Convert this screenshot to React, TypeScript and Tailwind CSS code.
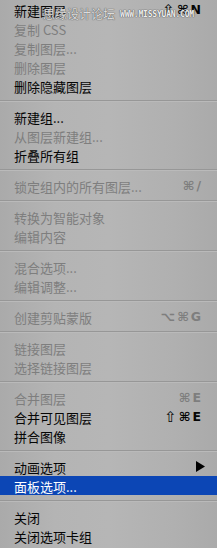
import React from "react";

type Item = {
  label: string;
  disabled?: boolean;
  shortcut?: string;
  submenu?: boolean;
  active?: boolean;
};

const sections: Item[][] = [
  [
    { label: "新建图层", shortcut: "⇧⌘N" },
    { label: "复制 CSS", disabled: true },
    { label: "复制图层...", disabled: true },
    { label: "删除图层", disabled: true },
    { label: "删除隐藏图层" },
  ],
  [
    { label: "新建组..." },
    { label: "从图层新建组...", disabled: true },
    { label: "折叠所有组" },
  ],
  [{ label: "锁定组内的所有图层...", disabled: true, shortcut: "⌘/" }],
  [
    { label: "转换为智能对象", disabled: true },
    { label: "编辑内容", disabled: true },
  ],
  [
    { label: "混合选项...", disabled: true },
    { label: "编辑调整...", disabled: true },
  ],
  [{ label: "创建剪贴蒙版", disabled: true, shortcut: "⌥⌘G" }],
  [
    { label: "链接图层", disabled: true },
    { label: "选择链接图层", disabled: true },
  ],
  [
    { label: "合并图层", disabled: true, shortcut: "⌘E" },
    { label: "合并可见图层", shortcut: "⇧⌘E" },
    { label: "拼合图像" },
  ],
  [
    { label: "动画选项", submenu: true },
    { label: "面板选项...", active: true },
  ],
  [{ label: "关闭" }, { label: "关闭选项卡组" }],
];

function Shortcut({ text }: { text: string }) {
  return (
    <span className="flex items-center gap-[2px] whitespace-nowrap font-['DejaVu_Sans',sans-serif] leading-none">
      {Array.from(text).map((ch, i) =>
        ch === "⇧" ? (
          <span key={i} className="text-[15px] font-normal">
            {ch}
          </span>
        ) : (
          <span key={i} className="text-[12.5px] font-semibold">
            {ch}
          </span>
        )
      )}
    </span>
  );
}

function Row({ item }: { item: Item }) {
  const color = item.active
    ? "bg-[#0c46b5] text-white"
    : item.disabled
    ? "text-[#7e7e7e]"
    : "text-[#050505]";
  return (
    <div
      className={`h-[19px] flex items-center justify-between pl-[14px] pr-[16px] pt-[2px] text-[13px] leading-none ${color}`}
    >
      <span className="whitespace-nowrap">{item.label}</span>
      {item.shortcut && <Shortcut text={item.shortcut} />}
      {item.submenu && (
        <svg width="9" height="11" viewBox="0 0 9 11" className="mr-[-4px] mt-[-2px]">
          <path d="M0 0 L9 5.5 L0 11 Z" fill="#000" />
        </svg>
      )}
    </div>
  );
}

function Separator() {
  return (
    <div className="h-[12px] flex flex-col justify-center">
      <div className="h-px bg-[#979797]" />
      <div className="h-px bg-[#bababa]" />
    </div>
  );
}

export default function App() {
  return (
    <div className="relative w-[217px] h-[548px] overflow-hidden bg-[linear-gradient(90deg,#aaaaaa_0%,#b4b4b4_25%,#b6b6b6_50%,#b0b0b0_80%,#aaaaaa_100%)] font-['Noto_Sans_CJK_SC','Noto_Sans',sans-serif]">
      {sections.map((sec, i) => (
        <React.Fragment key={i}>
          {i > 0 && <Separator />}
          {sec.map((it, j) => (
            <Row key={j} item={it} />
          ))}
        </React.Fragment>
      ))}
      <div className="absolute left-[43px] top-[8px] flex items-center gap-[5px] pointer-events-none">
        <span className="text-[12px] leading-none text-[#dcdcdc] [text-shadow:0_0_1px_#555,0_0_1px_#555]">
          思缘设计论坛
        </span>
        <span className="text-[8px] leading-none font-bold text-[#eeeeee] font-['DejaVu_Sans_Mono',monospace] tracking-[-0.2px] mt-[2px] [text-shadow:0_0_1px_#444,0_0_1px_#444]">
          WWW.MISSYUAN.COM
        </span>
      </div>
    </div>
  );
}
